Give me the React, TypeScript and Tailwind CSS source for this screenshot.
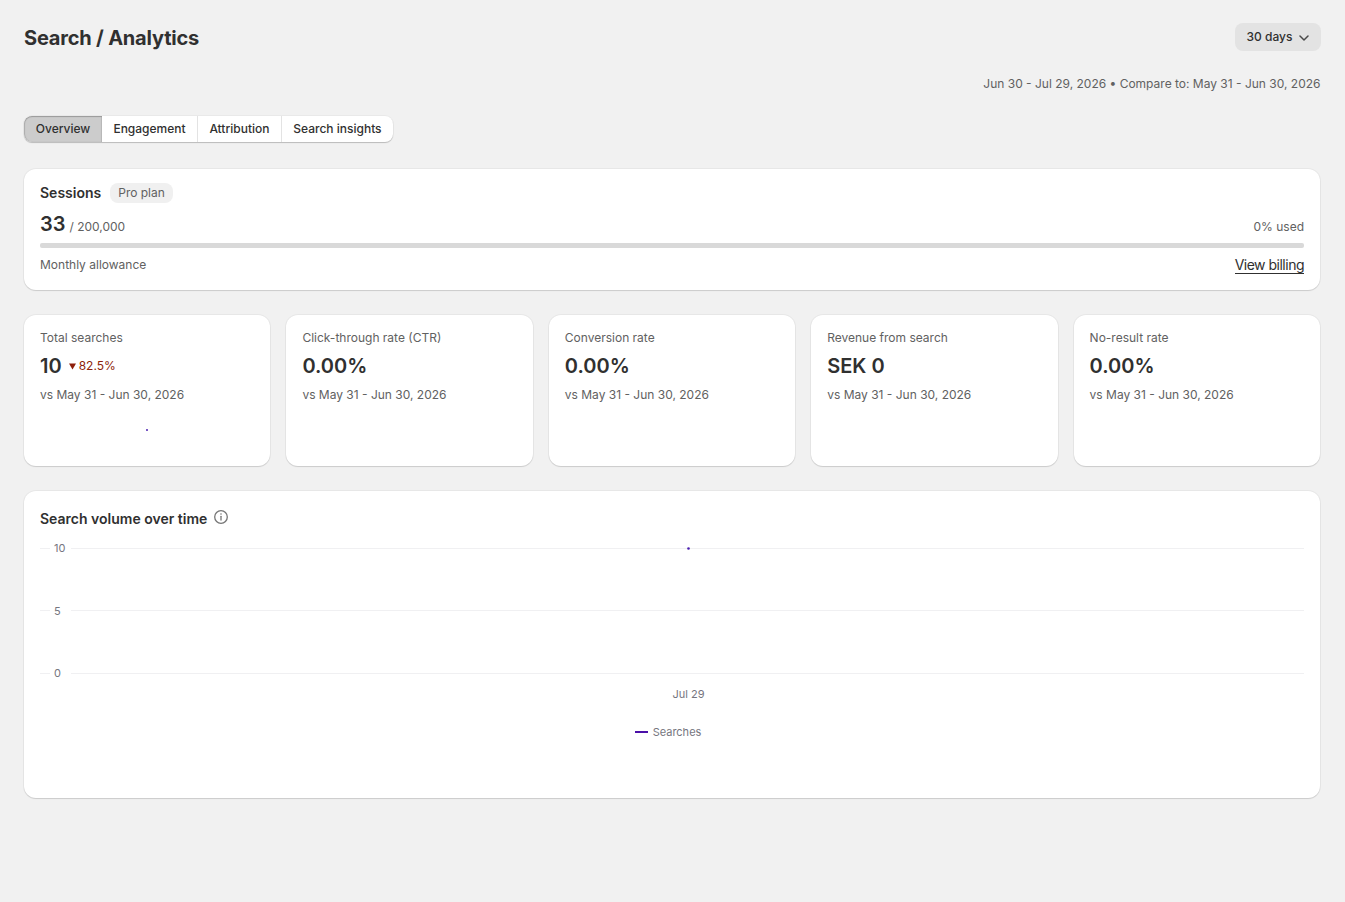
import type { ReactNode } from "react";

const PERIOD = "vs May 31 - Jun 30, 2026";

const tabs = ["Engagement", "Attribution", "Search insights"];

const metrics = [
  { label: "Total searches", value: "10", change: "82.5%", point: true },
  { label: "Click-through rate (CTR)", value: "0.00%" },
  { label: "Conversion rate", value: "0.00%" },
  { label: "Revenue from search", value: "SEK 0" },
  { label: "No-result rate", value: "0.00%" },
];

const ticks = ["10", "5", "0"];

function Card({ className, children }: { className: string; children: ReactNode }) {
  return (
    <section
      className={`rounded-xl bg-white px-4 shadow-[0_1px_1px_rgba(0,0,0,0.12),0_0_0_1px_rgba(0,0,0,0.04)] ${className}`}
    >
      {children}
    </section>
  );
}

function Metric({ label, value, change, point }: (typeof metrics)[number]) {
  return (
    <Card className="flex h-[151px] flex-col pt-[13px]">
      <h3 className="leading-5">{label}</h3>
      <div className="mt-1.5 flex h-6 items-center">
        <span className="text-xl font-semibold text-[#303030]">{value}</span>
        {change && (
          <span className="ml-[7px] flex items-center gap-[3px] text-[#8e1f0b]">
            <svg width="7" height="7" viewBox="0 0 7 7" fill="currentColor">
              <path d="M0 .5h7L3.5 6.5z" />
            </svg>
            {change}
          </span>
        )}
      </div>
      <p className="mt-[7px] leading-5">{PERIOD}</p>
      {point && (
        <svg className="mx-auto mt-6" width="2" height="2" viewBox="0 0 2 2">
          <circle cx="1" cy="1" r="1" fill="#4b1fb0" />
        </svg>
      )}
    </Card>
  );
}

export default function App() {
  return (
    <main className="min-h-screen bg-[#f1f1f1] pt-[23px] pr-[25px] pl-6 font-['Inter',sans-serif] text-[12px] text-[#616161]">
      {/* Header */}
      <header className="-mr-[0.5px] flex h-[29px] items-start justify-between">
        <h1 className="text-xl leading-[30px] font-[650] tracking-[-0.2px] text-[#303030]">
          Search / Analytics
        </h1>
        <button
          type="button"
          className="flex h-7 w-[86px] items-center gap-[7px] rounded-lg bg-[#e3e3e3] pl-3 font-[550] text-[#303030]"
        >
          30 days
          <svg
            className="mt-0.5"
            width="10"
            height="6"
            viewBox="0 0 10 6"
            fill="none"
            stroke="#4a4a4a"
            strokeWidth="1.5"
            strokeLinecap="round"
            strokeLinejoin="round"
          >
            <path d="M1 1l4 4 4-4" />
          </svg>
        </button>
      </header>
      <p className="mt-[22px] -mr-[0.5px] text-right leading-5">
        Jun 30 - Jul 29, 2026 • Compare to: May 31 - Jun 30, 2026
      </p>

      {/* Tabs */}
      <nav className="mt-[22px] flex h-[26px] w-fit overflow-hidden rounded-lg bg-white font-[550] text-[#303030] shadow-[0_1px_1px_rgba(0,0,0,0.2),0_0_0_1px_rgba(0,0,0,0.03)]">
        <button
          type="button"
          className="w-[78px] rounded-l-lg bg-[#cccccc] shadow-[inset_0_1px_1px_#9a9a9a,inset_1px_0_1px_#b0b0b0,inset_-1px_0_1px_#bbbbbb]"
        >
          Overview
        </button>
        {tabs.map((tab) => (
          <button key={tab} type="button" className="border-r border-[#e3e3e3] px-[11.4px] last:border-r-0">
            {tab}
          </button>
        ))}
      </nav>

      {/* Plan usage */}
      <Card className="mt-[27px] h-[121px] pt-3.5">
        <div className="flex h-5 items-center gap-[9px]">
          <h2 className="text-sm font-semibold text-[#303030]">Sessions</h2>
          <span className="rounded-lg bg-[#f0f0f0] px-2 leading-5">Pro plan</span>
        </div>
        <div className="mt-[7px] flex h-7 items-baseline">
          <span className="text-xl leading-7 font-semibold text-[#303030]">33</span>
          <span className="ml-1">/ 200,000</span>
          <span className="ml-auto">0% used</span>
        </div>
        <div className="mt-[5px] h-[5px] rounded-xs bg-[#d9d9d9]" />
        <div className="mt-[7px] flex h-5 items-center justify-between">
          <span>Monthly allowance</span>
          <a
            className="border-b border-[#303030] text-sm leading-[17px] tracking-[-0.5px] text-[#303030]"
            href="#"
          >
            View billing
          </a>
        </div>
      </Card>

      {/* Metrics */}
      <div className="mt-[25px] grid grid-cols-5 gap-4">
        {metrics.map((metric) => (
          <Metric key={metric.label} {...metric} />
        ))}
      </div>

      {/* Volume chart */}
      <Card className="mt-[25px] h-[307px] pt-[18px]">
        <div className="flex h-5 gap-[7px]">
          <h2 className="text-sm leading-5 font-semibold text-[#303030]">Search volume over time</h2>
          <svg className="mt-px" width="14" height="14" viewBox="0 0 14 14" fill="none" stroke="#767676">
            <circle cx="7" cy="7" r="6.3" strokeWidth="1.3" />
            <path d="M7 6.3v3.8" strokeWidth="1.3" strokeLinecap="round" />
            <circle cx="7" cy="4" r=".8" fill="#767676" stroke="none" />
          </svg>
        </div>
        <div className="mt-[9px] flex h-[145.5px] flex-col justify-between text-[11px] text-[#767680]">
          {ticks.map((tick) => (
            <div key={tick} className="flex h-5 items-center">
              <i className="h-px w-2.5 bg-[#f0f0f2]" />
              <span className="ml-1 w-[17px]">{tick}</span>
              <i className="flex h-px flex-1 items-center justify-center bg-[#f0f0f2] pl-0.5">
                {tick === "10" && (
                  <svg className="shrink-0" width="3" height="3" viewBox="0 0 3 3">
                    <circle cx="1.5" cy="1.5" r="1.3" fill="#4b1fb0" />
                  </svg>
                )}
              </i>
            </div>
          ))}
        </div>
        <p className="pl-[33px] text-center text-[11px] leading-5 text-[#767680]">Jul 29</p>
        <div className="mt-[18px] flex items-center justify-center gap-[5px] pr-2 text-[11px] leading-5 text-[#767680]">
          <i className="h-0.5 w-[13px] bg-[#4b10a8]" />
          Searches
        </div>
      </Card>
    </main>
  );
}
